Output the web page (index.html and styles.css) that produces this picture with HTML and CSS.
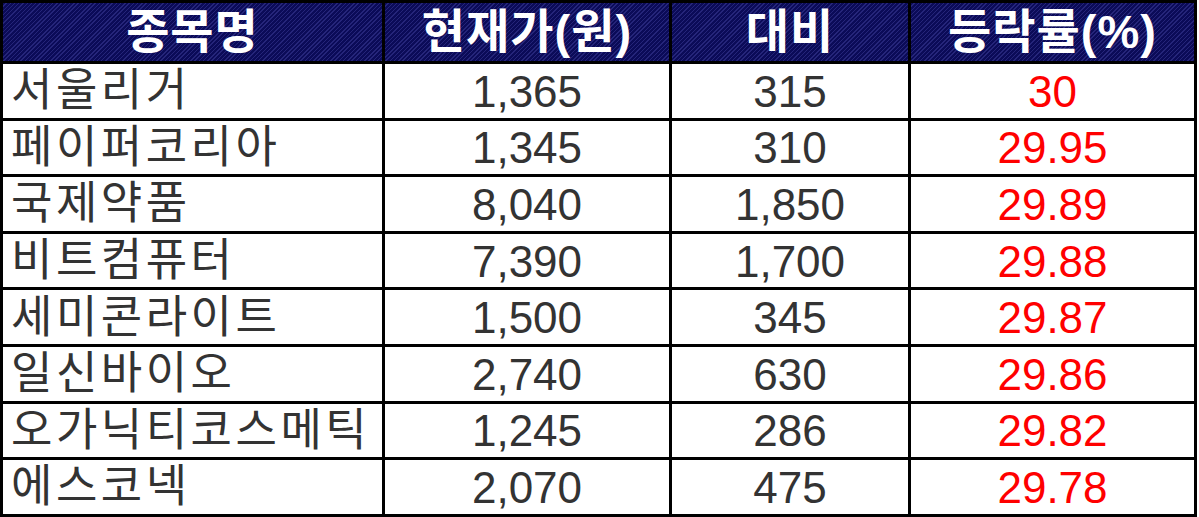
FILE: index.html
```html
<!DOCTYPE html>
<html lang="ko">
<head>
<meta charset="utf-8">
<title>등락률 상위 종목</title>
<link rel="stylesheet" href="styles.css">
</head>
<body>
<div class="table">
  <div class="cell head">종목명</div>
  <div class="cell head">현재가(원)</div>
  <div class="cell head">대비</div>
  <div class="cell head">등락률(%)</div>

  <div class="cell name">서울리거</div>
  <div class="cell num">1,365</div>
  <div class="cell num">315</div>
  <div class="cell num up">30</div>

  <div class="cell name">페이퍼코리아</div>
  <div class="cell num">1,345</div>
  <div class="cell num">310</div>
  <div class="cell num up">29.95</div>

  <div class="cell name">국제약품</div>
  <div class="cell num">8,040</div>
  <div class="cell num">1,850</div>
  <div class="cell num up">29.89</div>

  <div class="cell name">비트컴퓨터</div>
  <div class="cell num">7,390</div>
  <div class="cell num">1,700</div>
  <div class="cell num up">29.88</div>

  <div class="cell name">세미콘라이트</div>
  <div class="cell num">1,500</div>
  <div class="cell num">345</div>
  <div class="cell num up">29.87</div>

  <div class="cell name">일신바이오</div>
  <div class="cell num">2,740</div>
  <div class="cell num">630</div>
  <div class="cell num up">29.86</div>

  <div class="cell name">오가닉티코스메틱</div>
  <div class="cell num">1,245</div>
  <div class="cell num">286</div>
  <div class="cell num up">29.82</div>

  <div class="cell name">에스코넥</div>
  <div class="cell num">2,070</div>
  <div class="cell num">475</div>
  <div class="cell num up">29.78</div>
</div>
</body>
</html>
```

FILE: styles.css
```css
html, body {
  margin: 0;
  padding: 0;
  background: #ffffff;
}

.table {
  width: 1197px;
  box-sizing: border-box;
  display: grid;
  grid-template-columns: 379px 284px 236px 283px;
  grid-template-rows: 58px repeat(8, 53.6px);
  gap: 3px;
  padding: 3px;
  background: #000000;
  font-family: "Liberation Sans", "Noto Sans CJK KR", sans-serif;
}

.cell {
  display: flex;
  align-items: center;
  justify-content: center;
  background: #ffffff;
  color: #333333;
  font-size: 44px;
  line-height: 1;
  white-space: nowrap;
  overflow: hidden;
}

.head {
  color: #ffffff;
  font-weight: bold;
  font-size: 47px;
  letter-spacing: 1px;
  background-color: #0b0b58;
  background-image: repeating-linear-gradient(135deg, #0b0b58 0px, #0b0b58 2px, #25257a 2px, #25257a 3px);
  padding-bottom: 2px;
}

.name {
  justify-content: flex-start;
  padding-left: 8px;
  font-size: 45px;
  letter-spacing: 3.5px;
}

.num {
  padding-top: 2px;
}

.up {
  color: #ff0000;
}
```
